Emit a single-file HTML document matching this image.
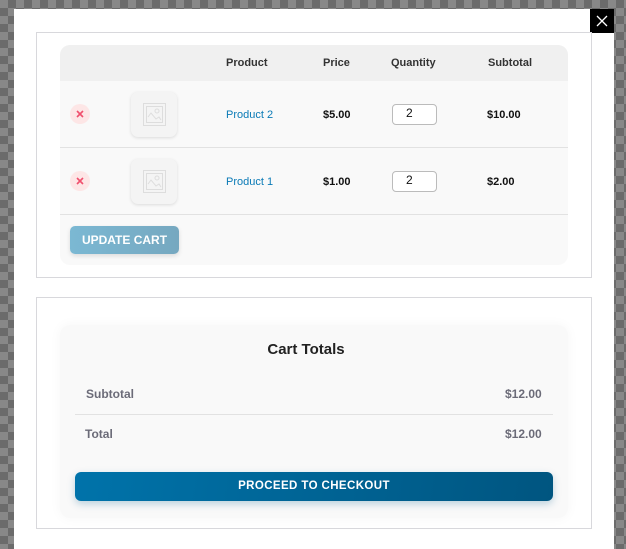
<!DOCTYPE html>
<html><head><meta charset="utf-8"><style>
*{box-sizing:border-box;margin:0;padding:0}
body{width:626px;height:542px;overflow:hidden;font-family:"Liberation Sans",Arial,sans-serif;
background-color:#888;background-image:linear-gradient(45deg,#6b6b6b 25%,transparent 25%,transparent 75%,#6b6b6b 75%),linear-gradient(45deg,#6b6b6b 25%,transparent 25%,transparent 75%,#6b6b6b 75%);background-size:16px 16px;background-position:0 0,8px 8px;position:relative}
.a{position:absolute}
.modal{left:14px;top:9px;width:600px;height:540px;background:#fff}
.close{left:590px;top:9px;width:24px;height:24px;background:#000}
.panel{border:1px solid #d8d8dc;background:#fff;left:36px;width:556px}
.box{background:#f9f9f9;border-radius:10px;left:60px;width:508px}
.th{font-size:11px;font-weight:bold;color:#333}
.td{font-size:11px;font-weight:bold;color:#111}
.lnk{font-size:11px;color:#0a7ab6}
.rm{width:20px;height:20px;border-radius:50%;background:#fde6e6}
.img{width:46px;height:45px;border-radius:7px;background:#f4f4f4;box-shadow:0 1px 3px rgba(0,0,0,.12)}
.qty{width:45px;height:21px;border:1px solid #bbb;border-radius:4px;background:#fff;font-size:12px;padding-left:13px;line-height:16px;color:#111}
.line{height:1px;background:#e2e2e2}
.tl{font-size:12px;font-weight:bold;color:#6b6b78}
</style></head><body>
<div class="a modal"></div>
<div class="a close"><svg width="24" height="24"><path d="M7 7L17 17M17 7L7 17" stroke="#fff" stroke-width="1.3"/></svg></div>
<div class="a panel" style="top:32px;height:246px"></div>
<div class="a box" style="top:45px;height:220px;overflow:hidden">
<div class="a" style="left:0;top:0;width:508px;height:36px;background:#f0f0f0"></div>
</div>
<div class="a th" style="left:226px;top:57px">Product</div>
<div class="a th" style="left:323px;top:57px">Price</div>
<div class="a th" style="left:391px;top:57px">Quantity</div>
<div class="a th" style="left:488px;top:57px">Subtotal</div>
<div class="a line" style="left:60px;top:147px;width:508px"></div>
<div class="a line" style="left:60px;top:214px;width:508px"></div>
<div class="a rm" style="left:70px;top:104px"><svg width="20" height="20"><path d="M7 7L13 13M13 7L7 13" stroke="#f0506e" stroke-width="1.6"/></svg></div>
<div class="a rm" style="left:70px;top:171px"><svg width="20" height="20"><path d="M7 7L13 13M13 7L7 13" stroke="#f0506e" stroke-width="1.6"/></svg></div>
<div class="a img" style="left:131px;top:92px"><svg class="a" style="left:12px;top:11px" width="23" height="23"><rect x="0.5" y="0.5" width="22" height="22" fill="none" stroke="#ddd"/><rect x="3.5" y="3.5" width="16" height="16" fill="none" stroke="#ddd"/><circle cx="14" cy="8" r="2" fill="none" stroke="#ddd"/><path d="M5 14l3-4 5 6 3-2 2 3" fill="none" stroke="#ddd"/></svg></div>
<div class="a img" style="left:131px;top:159px"><svg class="a" style="left:12px;top:11px" width="23" height="23"><rect x="0.5" y="0.5" width="22" height="22" fill="none" stroke="#ddd"/><rect x="3.5" y="3.5" width="16" height="16" fill="none" stroke="#ddd"/><circle cx="14" cy="8" r="2" fill="none" stroke="#ddd"/><path d="M5 14l3-4 5 6 3-2 2 3" fill="none" stroke="#ddd"/></svg></div>
<div class="a lnk" style="left:226px;top:109px">Product 2</div>
<div class="a lnk" style="left:226px;top:176px">Product 1</div>
<div class="a td" style="left:323px;top:109px">$5.00</div>
<div class="a td" style="left:323px;top:176px">$1.00</div>
<div class="a qty" style="left:392px;top:104px">2</div>
<div class="a qty" style="left:392px;top:171px">2</div>
<div class="a td" style="left:487px;top:109px">$10.00</div>
<div class="a td" style="left:487px;top:176px">$2.00</div>
<div class="a" style="left:70px;top:226px;width:109px;height:28px;border-radius:5px;background:linear-gradient(90deg,#7bb8d3,#76a8c0);color:#fff;font-size:12px;font-weight:bold;text-align:center;line-height:28px;box-shadow:0 2px 5px rgba(0,0,0,.12)">UPDATE CART</div>

<div class="a panel" style="top:297px;height:232px"></div>
<div class="a box" style="top:325px;height:193px;box-shadow:0 0 12px rgba(0,0,0,.04)"></div>
<div class="a" style="left:52px;top:341px;width:508px;text-align:center;font-size:15px;font-weight:bold;color:#222">Cart Totals</div>
<div class="a tl" style="left:86px;top:387px">Subtotal</div>
<div class="a tl" style="left:505px;top:387px">$12.00</div>
<div class="a line" style="left:75px;top:414px;width:478px"></div>
<div class="a tl" style="left:85px;top:427px">Total</div>
<div class="a tl" style="left:505px;top:427px">$12.00</div>
<div class="a" style="left:75px;top:472px;width:478px;height:29px;border-radius:6px;background:linear-gradient(100deg,#0073aa,#005580);color:#fff;font-size:11.5px;letter-spacing:0.4px;font-weight:bold;text-align:center;line-height:29px;box-shadow:0 3px 8px rgba(0,90,140,.25)">PROCEED TO CHECKOUT</div>
</body></html>
